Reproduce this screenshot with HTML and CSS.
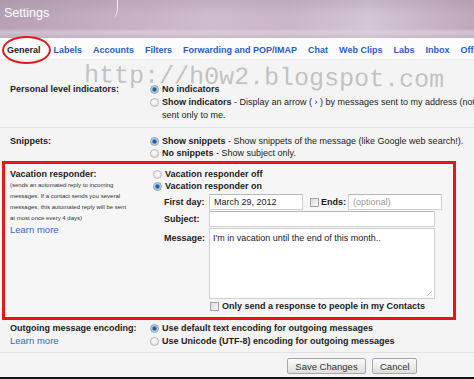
FILE: index.html
```html
<!DOCTYPE html>
<html>
<head>
<meta charset="utf-8">
<link rel="stylesheet" href="styles.css">
</head>
<body>
<div class="page">
  <header class="header">
    <span class="title">Settings</span>
    <span class="wisp"></span>
  </header>
  <nav class="tabs">
    <span class="tab active">General</span>
    <span class="tab">Labels</span>
    <span class="tab">Accounts</span>
    <span class="tab">Filters</span>
    <span class="tab">Forwarding and POP/IMAP</span>
    <span class="tab">Chat</span>
    <span class="tab">Web Clips</span>
    <span class="tab">Labs</span>
    <span class="tab">Inbox</span>
    <span class="tab">Offline</span>
  </nav>
  <main class="content">
    <section class="row row-indicators">
      <div class="label">Personal level indicators:</div>
      <div class="options">
        <div class="opt"><span class="radio on"></span><b>No indicators</b></div>
        <div class="opt"><span class="radio"></span><span><b>Show indicators</b> - Display an arrow ( › ) by messages sent to my address (not a mailing list), and a double arrow ( » ) by messages</span></div>
        <div class="opt cont">sent only to me.</div>
      </div>
    </section>
    <section class="row row-snippets">
      <div class="label">Snippets:</div>
      <div class="options">
        <div class="opt"><span class="radio on"></span><span><b>Show snippets</b> - Show snippets of the message (like Google web search!).</span></div>
        <div class="opt"><span class="radio"></span><span><b>No snippets</b> - Show subject only.</span></div>
      </div>
    </section>
    <section class="row vacation">
      <div class="label">
        <div>Vacation responder:</div>
        <div class="note">(sends an automated reply to incoming<br>messages. If a contact sends you several<br>messages, this automated reply will be sent<br>at most once every 4 days)</div>
        <a class="link">Learn more</a>
      </div>
      <div class="options">
        <div class="opt"><span class="radio"></span><b>Vacation responder off</b></div>
        <div class="opt"><span class="radio on"></span><b>Vacation responder on</b></div>
        <div class="form">
          <div class="flabel">First day:</div>
          <div class="fline">
            <span class="input date">March 29, 2012</span>
            <span class="check"></span><b class="ends">Ends:</b>
            <span class="input optional">(optional)</span>
          </div>
          <div class="flabel">Subject:</div>
          <div class="fline"><span class="input subject"></span></div>
          <div class="flabel msg">Message:</div>
          <div class="fline"><div class="textarea">I'm in vacation until the end of this month..<span class="grip"></span></div></div>
        </div>
        <div class="opt contacts"><span class="check"></span><b>Only send a response to people in my Contacts</b></div>
      </div>
    </section>
    <section class="row row-encoding">
      <div class="label">
        <div>Outgoing message encoding:</div>
        <a class="link plain">Learn more</a>
      </div>
      <div class="options">
        <div class="opt"><span class="radio on"></span><b>Use default text encoding for outgoing messages</b></div>
        <div class="opt"><span class="radio"></span><b>Use Unicode (UTF-8) encoding for outgoing messages</b></div>
      </div>
    </section>
    <div class="actions">
      <button class="btn">Save Changes</button>
      <button class="btn">Cancel</button>
    </div>
  </main>
  <div class="taskbar"></div>
  <div class="ellipse"></div>
  <div class="watermark">http://h0w2.blogspot.com</div>
</div>
</body>
</html>
```
FILE: styles.css
```css
* { box-sizing: border-box; }
html, body { margin: 0; padding: 0; }
body {
  width: 474px;
  height: 379px;
  overflow: hidden;
  background: #f4f4f4;
  font-family: "Liberation Sans", Arial, sans-serif;
  font-size: 9px;
  color: #222;
}
.page {
  position: relative;
  width: 474px;
  height: 379px;
  overflow: hidden;
}
.header {
  position: relative;
  height: 38px;
  padding: 5px 0 0 4px;
  background:
    linear-gradient(180deg, rgba(150,130,150,0.25) 0%, rgba(255,255,255,0) 40%, rgba(255,255,255,0) 76%, rgba(225,215,225,0.6) 84%, rgba(200,185,200,0.5) 100%),
    linear-gradient(90deg, #b7a0b4 0%, #c6b0c3 25%, #cfbdcc 45%, #c9b6c7 60%, #d4c6d2 78%, #bea8bb 100%);
}
.title {
  color: #fff;
  font-size: 12.5px;
  line-height: 16px;
}
.wisp {
  position: absolute;
  left: 110px;
  top: 0;
  width: 8px;
  height: 18px;
  border-right: 1px solid rgba(255,255,255,0.8);
  border-radius: 0 0 60% 0;
}
.tabs {
  display: flex;
  gap: 11px;
  height: 22px;
  align-items: center;
  padding: 2px 0 0 7px;
  background: #fcfcfd;
  border-bottom: 1px solid #ececec;
  white-space: nowrap;
  font-weight: bold;
  font-size: 9px;
}
.tab { color: #2b5cbf; }
.tab.active { color: #222; margin-right: 2px; }
.content { background: #f4f4f4; }
.row {
  display: grid;
  grid-template-columns: 140px 1fr;
  padding-left: 10px;
}
.label { font-weight: bold; }
.opt {
  display: flex;
  align-items: center;
  white-space: nowrap;
}
.opt b { font-weight: bold; }
.opt.cont { padding-left: 12px; }
.radio {
  flex: none;
  width: 9px;
  height: 9px;
  margin-right: 3px;
  border-radius: 50%;
  border: 1px solid #b9b9b9;
  background: radial-gradient(circle at 45% 40%, #ffffff 0, #f1f1f1 40%, #d5d5d5 100%);
}
.radio.on {
  border-color: #8fa3b4;
  background: radial-gradient(circle at 50% 50%, #1d4f86 0, #2d6aa8 1.6px, #a8c3d9 2.6px, #eef3f8 100%);
}
.check {
  flex: none;
  display: inline-block;
  width: 9px;
  height: 9px;
  border: 1px solid #a5a5a5;
  background: linear-gradient(135deg, #dcdcdc, #f8f8f8);
}
.row-indicators {
  padding-top: 23px;
  padding-bottom: 5px;
  border-bottom: 1px solid #e4e4e4;
  line-height: 13px;
}
.row-snippets {
  padding-top: 7px;
  padding-bottom: 2px;
  line-height: 12px;
}
.vacation {
  margin-left: 2px;
  width: 454px;
  height: 159px;
  padding: 4px 0 0 5px;
  border: 3px solid #e3161b;
  grid-template-columns: 143px 1fr;
  line-height: 12px;
  background: #f6f6f6;
}
.note {
  font-weight: normal;
  font-size: 6px;
  line-height: 11px;
  color: #333;
}
.link {
  display: block;
  font-weight: normal;
  color: #3a66c4;
  font-size: 9.5px;
  line-height: 12px;
}
.form {
  display: grid;
  grid-template-columns: 45px 1fr;
  grid-auto-rows: auto;
  row-gap: 1px;
  margin-top: 2px;
  padding-left: 11px;
}
.flabel {
  font-weight: bold;
  line-height: 16px;
}
.flabel.msg { padding-top: 2px; }
.fline {
  display: flex;
  align-items: center;
  height: 16px;
}
.fline:last-child { height: auto; }
.input {
  display: inline-block;
  height: 16px;
  border: 1px solid #cfcfcf;
  border-top-color: #b8b8b8;
  background: #fff;
  padding-left: 4px;
  line-height: 14px;
  font-weight: normal;
}
.input.date { width: 94px; }
.fline .check { margin-left: 7px; }
.ends { margin-left: 2px; margin-right: 2px; }
.input.optional { width: 94px; color: #9a9a9a; }
.input.subject { width: 226px; }
.textarea {
  position: relative;
  width: 226px;
  height: 71px;
  border: 1px solid #cfcfcf;
  background: #fff;
  padding: 4px 3px;
  line-height: 11px;
}
.grip {
  position: absolute;
  right: 2px;
  bottom: 2px;
  width: 5px;
  height: 5px;
  background: linear-gradient(135deg, transparent 50%, #c8c8c8 50%, #c8c8c8 60%, transparent 60%, transparent 75%, #c8c8c8 75%, #c8c8c8 85%, transparent 85%);
}
.opt.contacts {
  margin-top: 1px;
  padding-left: 57px;
}
.opt.contacts .check { margin-right: 3px; }
.row-encoding {
  padding-top: 2px;
  padding-bottom: 4px;
  border-bottom: 1px solid #e4e4e4;
  line-height: 13px;
}
.row-encoding .link { line-height: 11px; }
.actions {
  display: flex;
  justify-content: flex-end;
  gap: 6px;
  padding: 5px 57px 0 0;
  height: 24px;
}
.btn {
  height: 16px;
  margin: 0;
  padding: 0 7px;
  font-family: "Liberation Sans", Arial, sans-serif;
  font-size: 9.5px;
  color: #333;
  border: 1px solid #a9a9a9;
  border-radius: 2px;
  background: linear-gradient(180deg, #fbfbfb 0%, #ececec 55%, #dcdcdc 100%);
}
.btn:first-child { width: 79px; }
.btn:last-child { width: 45px; }
.taskbar {
  height: 3px;
  background: #141414;
}
.ellipse {
  position: absolute;
  left: 2px;
  top: 36px;
  width: 49px;
  height: 28px;
  border: 2px solid #e01a1f;
  border-radius: 50%;
}
.watermark {
  position: absolute;
  left: 84px;
  top: 63px;
  font-family: "Liberation Mono", "DejaVu Sans Mono", monospace;
  font-size: 25px;
  line-height: 25px;
  color: rgba(150,150,150,0.55);
  white-space: nowrap;
  transform: rotate(0.8deg);
  transform-origin: left center;
  pointer-events: none;
}
```
